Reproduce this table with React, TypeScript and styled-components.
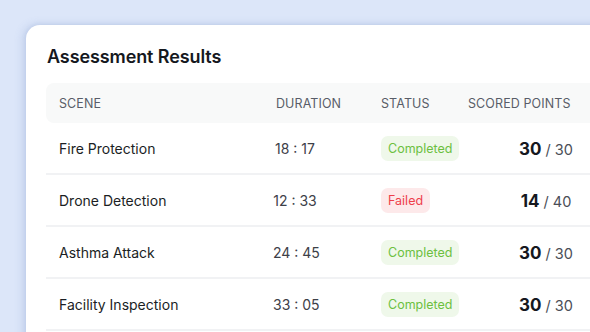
import React from "react";
import styled, { createGlobalStyle } from "styled-components";

const GlobalStyle = createGlobalStyle`
  html, body {
    margin: 0;
    padding: 0;
    background: #dce6f9;
    overflow: hidden;
  }
  body {
    font-family: Inter, "Noto Sans", "Liberation Sans", sans-serif;
    -webkit-font-smoothing: antialiased;
  }
`;

const Page = styled.div`
  width: 590px;
  height: 332px;
  padding: 25px 0 0 26px;
  box-sizing: border-box;
  overflow: hidden;
`;

const Card = styled.section`
  width: 620px;
  min-height: 340px;
  background: #ffffff;
  border-radius: 14px;
  box-shadow: -3px 0 10px rgba(80, 110, 180, 0.18), 0 -1px 4px rgba(80, 110, 180, 0.1);
  padding: 21px 0 0 20px;
  box-sizing: border-box;
`;

const Title = styled.h2`
  margin: 0 0 15px 1px;
  font-size: 18px;
  line-height: 22px;
  font-weight: 600;
  color: #15181e;
  letter-spacing: -0.1px;
`;

const Table = styled.div`
  display: flex;
  flex-direction: column;
`;

const columns = `217px 105px 87px 156px`;

const HeaderRow = styled.div`
  display: grid;
  grid-template-columns: ${columns};
  align-items: center;
  height: 40px;
  padding-left: 13px;
  background: #f8f9f9;
  border-radius: 8px 0 0 8px;
`;

const HeaderCell = styled.div`
  font-size: 12.5px;
  color: #585d68;
  text-transform: uppercase;
  letter-spacing: 0.1px;
`;

const Row = styled.div`
  display: grid;
  grid-template-columns: ${columns};
  align-items: center;
  height: 52px;
  padding-left: 13px;
  padding-top: 1px;
  border-bottom: 2px solid #f1f2f4;
  box-sizing: border-box;
`;

const SceneCell = styled.div`
  font-size: 14px;
  color: #1b1e24;
`;

const DurationCell = styled.div`
  width: 44px;
  margin-left: -3px;
  text-align: center;
  font-size: 14px;
  color: #3d4048;
  white-space: pre;
`;

const Badge = styled.span<{ $tone: "ok" | "fail" }>`
  justify-self: start;
  display: inline-flex;
  align-items: center;
  height: 25px;
  padding: 0 7px;
  border-radius: 7px;
  font-size: 12.5px;
  background: ${(p) => (p.$tone === "ok" ? "#eff8ea" : "#fde9ea")};
  color: ${(p) => (p.$tone === "ok" ? "#6cc03f" : "#ee3f4a")};
`;

const ScoreCell = styled.div`
  text-align: center;
  color: #4a4e57;
  font-size: 14.5px;
  white-space: pre;
`;

const Scored = styled.b`
  font-size: 17px;
  font-weight: 700;
  color: #15181e;
`;

type Result = {
  scene: string;
  duration: string;
  status: "Completed" | "Failed";
  scored: number;
  total: number;
};

const results: Result[] = [
  { scene: "Fire Protection", duration: "18 : 17", status: "Completed", scored: 30, total: 30 },
  { scene: "Drone Detection", duration: "12 : 33", status: "Failed", scored: 14, total: 40 },
  { scene: "Asthma Attack", duration: "24 : 45", status: "Completed", scored: 30, total: 30 },
  { scene: "Facility Inspection", duration: "33 : 05", status: "Completed", scored: 30, total: 30 },
];

export default function App() {
  return (
    <>
      <GlobalStyle />
      <Page>
        <Card>
          <Title>Assessment Results</Title>
          <Table>
            <HeaderRow>
              <HeaderCell>Scene</HeaderCell>
              <HeaderCell>Duration</HeaderCell>
              <HeaderCell>Status</HeaderCell>
              <HeaderCell>Scored Points</HeaderCell>
            </HeaderRow>
            {results.map((r) => (
              <Row key={r.scene}>
                <SceneCell>{r.scene}</SceneCell>
                <DurationCell>{r.duration}</DurationCell>
                <Badge $tone={r.status === "Completed" ? "ok" : "fail"}>{r.status}</Badge>
                <ScoreCell>
                  <Scored>{r.scored}</Scored> / {r.total}
                </ScoreCell>
              </Row>
            ))}
          </Table>
        </Card>
      </Page>
    </>
  );
}
